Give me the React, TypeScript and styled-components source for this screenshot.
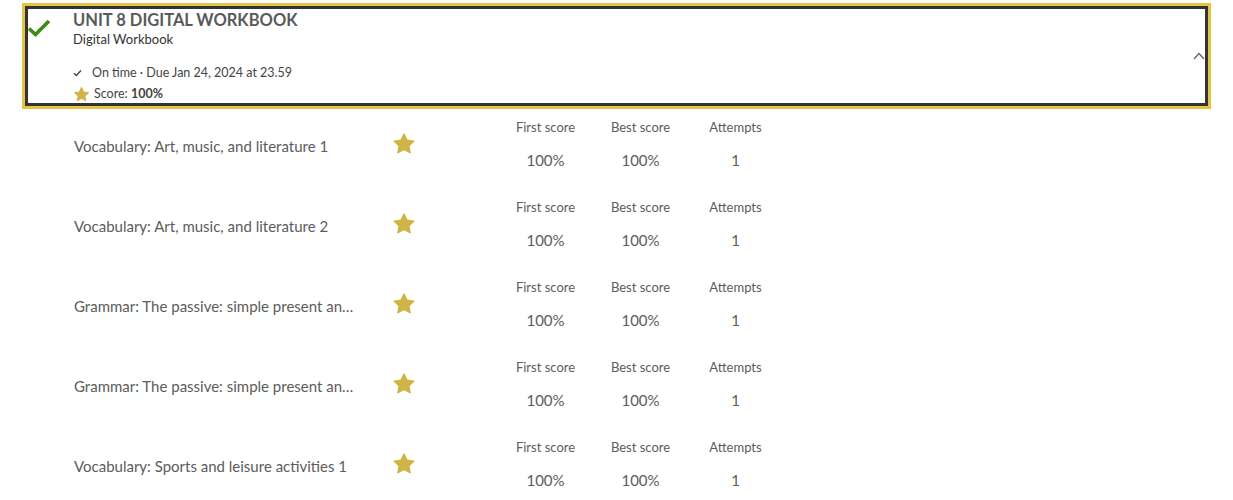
import React from "react";
import styled, { createGlobalStyle } from "styled-components";

const GlobalStyle = createGlobalStyle`
  body {
    margin: 0;
    background: #ffffff;
    font-family: "Lato", "Liberation Sans", sans-serif;
    color: #5c5c5c;
  }
`;

interface IActivity {
  name: string;
  firstScore: string;
  bestScore: string;
  attempts: number;
}

const activities: IActivity[] = [
  { name: "Vocabulary: Art, music, and literature 1", firstScore: "100%", bestScore: "100%", attempts: 1 },
  { name: "Vocabulary: Art, music, and literature 2", firstScore: "100%", bestScore: "100%", attempts: 1 },
  { name: "Grammar: The passive: simple present and simple past", firstScore: "100%", bestScore: "100%", attempts: 1 },
  { name: "Grammar: The passive: simple present and present perfect", firstScore: "100%", bestScore: "100%", attempts: 1 },
  { name: "Vocabulary: Sports and leisure activities 1", firstScore: "100%", bestScore: "100%", attempts: 1 },
];

const Star: React.FC<{ size: number }> = ({ size }) => (
  <svg width={size} height={size} viewBox="0 0 24 24">
    <path
      d="M12 2.2l2.9 6.2 6.8.8-5 4.7 1.3 6.7L12 17.3l-6 3.3 1.3-6.7-5-4.7 6.8-.8z"
      fill="#d0b446"
      stroke="#d0b446"
      strokeWidth="1.6"
      strokeLinejoin="round"
    />
  </svg>
);

const App: React.FC = () => {
  return (
    <Page>
      <GlobalStyle />
      <Header>
        <BigCheck width="24" height="18" viewBox="0 0 24 18">
          <path d="M2 9.5l6.5 6L22 2" fill="none" stroke="#3d8a10" strokeWidth="3.6" />
        </BigCheck>
        <HeaderBody>
          <Title>UNIT 8 DIGITAL WORKBOOK</Title>
          <Subtitle>Digital Workbook</Subtitle>
          <MetaLine>
            <svg width="10" height="10" viewBox="0 0 10 10">
              <path d="M1 5.2l2.3 2.2L8 2.6" fill="none" stroke="#444" strokeWidth="1.4" />
            </svg>
            <span>On time · Due Jan 24, 2024 at 23.59</span>
          </MetaLine>
          <ScoreLine>
            <Star size={17} />
            <span>
              Score: <strong>100%</strong>
            </span>
          </ScoreLine>
        </HeaderBody>
        <Chevron width="12" height="8" viewBox="0 0 12 8">
          <path d="M1 7l5-5.5L11 7" fill="none" stroke="#666" strokeWidth="1.4" />
        </Chevron>
      </Header>
      <List>
        {activities.map((activity, i) => (
          <Row key={i}>
            <Name>{activity.name}</Name>
            <StarCell>
              <Star size={24} />
            </StarCell>
            <Stats>
              <Stat>
                <StatLabel>First score</StatLabel>
                <StatValue>{activity.firstScore}</StatValue>
              </Stat>
              <Stat>
                <StatLabel>Best score</StatLabel>
                <StatValue>{activity.bestScore}</StatValue>
              </Stat>
              <Stat>
                <StatLabel>Attempts</StatLabel>
                <StatValue>{activity.attempts}</StatValue>
              </Stat>
            </Stats>
          </Row>
        ))}
      </List>
    </Page>
  );
};

export default App;

const Page = styled.div`
  padding: 6px 25px 0 25px;
  width: 1183px;
`;

const Header = styled.div`
  display: flex;
  align-items: flex-start;
  height: 100px;
  box-sizing: border-box;
  border: 3px solid #333333;
  outline: 3px solid #e6c443;
  background: #fff;
`;

const BigCheck = styled.svg`
  margin: 10px 0 0 -1px;
  flex-shrink: 0;
`;

const HeaderBody = styled.div`
  flex: 1;
  padding: 1px 0 0 22px;
  display: flex;
  flex-direction: column;
`;

const Title = styled.div`
  font-size: 16.5px;
  font-weight: 700;
  color: #5a5a5a;
  line-height: 20px;
`;

const Subtitle = styled.div`
  font-size: 13px;
  color: #333;
  line-height: 18px;
`;

const MetaLine = styled.div`
  display: flex;
  align-items: center;
  gap: 9px;
  margin-top: 16px;
  font-size: 12.5px;
  color: #444;
  line-height: 18px;
`;

const ScoreLine = styled.div`
  display: flex;
  align-items: center;
  gap: 4px;
  margin-top: 2px;
  font-size: 12.5px;
  color: #444;
  line-height: 20px;

  strong {
    font-weight: 700;
  }
`;

const Chevron = styled.svg`
  margin: 43px 0 0 0;
`;

const List = styled.div`
  display: flex;
  flex-direction: column;
  padding-top: 4px;
`;

const Row = styled.div`
  display: flex;
  align-items: center;
  height: 80px;
`;

const Name = styled.div`
  width: 283px;
  padding-left: 49px;
  font-size: 15px;
  color: #5c5c5c;
  white-space: nowrap;
  overflow: hidden;
  text-overflow: ellipsis;
  margin-top: -8px;
`;

const StarCell = styled.div`
  width: 24px;
  margin-left: 35px;
  margin-top: -12px;
  display: flex;
`;

const Stats = styled.div`
  display: flex;
  align-self: flex-start;
  margin-left: 82px;
  padding-top: 8px;
`;

const Stat = styled.div`
  width: 95px;
  display: flex;
  flex-direction: column;
  align-items: center;
`;

const StatLabel = styled.div`
  font-size: 13px;
  color: #5c5c5c;
  line-height: 18px;
`;

const StatValue = styled.div`
  font-size: 15px;
  color: #5c5c5c;
  margin-top: 15px;
`;
